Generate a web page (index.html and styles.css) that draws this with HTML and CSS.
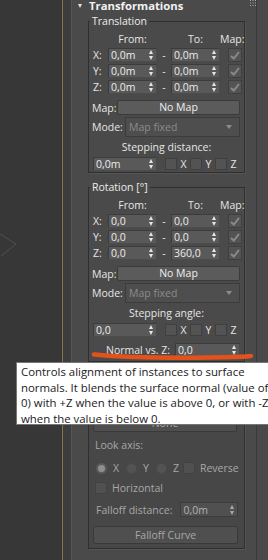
FILE: index.html
```html
<!DOCTYPE html>
<html>
<head>
<meta charset="utf-8">
<link rel="stylesheet" href="styles.css">
</head>
<body>
<div class="app">
  <div class="viewport">
    <svg class="vp-lines" width="62" height="560" viewBox="0 0 62 560"><path d="M0 234 L16 244 L1 256" fill="none" stroke="#505050" stroke-width="1"/></svg>
  </div>
  <div class="gold"></div>
  <div class="gutter"></div>
  <div class="rollout">
    <div class="ro-head">
      <span class="tri"></span>
      <span class="ro-title">Transformations</span>
      <svg class="dots" width="6" height="6" viewBox="0 0 6 6"><g fill="#a8a8a8"><rect x="0" y="0" width="1" height="1"/><rect x="2.5" y="0" width="1" height="1"/><rect x="5" y="0" width="1" height="1"/><rect x="0" y="2.5" width="1" height="1"/><rect x="2.5" y="2.5" width="1" height="1"/><rect x="5" y="2.5" width="1" height="1"/><rect x="0" y="5" width="1" height="1"/><rect x="2.5" y="5" width="1" height="1"/><rect x="5" y="5" width="1" height="1"/></g></svg>
    </div>
    <div class="ro-body">
      <div class="group">
        <div class="g-title">Translation</div>
        <div class="sgrid">
          <span></span><span class="ch">From:</span><span></span><span class="ch">To:</span><span class="ch map">Map:</span>
          <span class="axis">X:</span><div class="spin"><span>0,0m</span><i class="arr"></i></div><span class="dash">-</span><div class="spin"><span>0,0m</span><i class="arr"></i></div><span class="cb on"><svg width="10" height="9" viewBox="0 0 10 9"><path d="M1 5 L3.8 7.5 L9 1" fill="none" stroke="#8a8a8a" stroke-width="2"/></svg></span>
          <span class="axis">Y:</span><div class="spin"><span>0,0m</span><i class="arr"></i></div><span class="dash">-</span><div class="spin"><span>0,0m</span><i class="arr"></i></div><span class="cb on"><svg width="10" height="9" viewBox="0 0 10 9"><path d="M1 5 L3.8 7.5 L9 1" fill="none" stroke="#8a8a8a" stroke-width="2"/></svg></span>
          <span class="axis">Z:</span><div class="spin"><span>0,0m</span><i class="arr"></i></div><span class="dash">-</span><div class="spin"><span>0,0m</span><i class="arr"></i></div><span class="cb on"><svg width="10" height="9" viewBox="0 0 10 9"><path d="M1 5 L3.8 7.5 L9 1" fill="none" stroke="#8a8a8a" stroke-width="2"/></svg></span>
        </div>
        <div class="maprow"><span class="lbl-map">Map:</span><div class="btn">No Map</div></div>
        <div class="moderow"><span class="lbl-mode">Mode:</span><div class="dd"><span>Map fixed</span><i class="dd-arr"></i></div></div>
        <div class="steplabel">Stepping distance:</div>
        <div class="steprow">
          <div class="spin step"><span>0,0m</span><i class="arr"></i></div>
          <span class="cb sm"></span><span class="ax">X</span>
          <span class="cb sm"></span><span class="ax">Y</span>
          <span class="cb sm"></span><span class="ax">Z</span>
        </div>
      </div>

      <div class="group g2">
        <div class="g-title">Rotation [°]</div>
        <div class="sgrid">
          <span></span><span class="ch">From:</span><span></span><span class="ch">To:</span><span class="ch map">Map:</span>
          <span class="axis">X:</span><div class="spin"><span>0,0</span><i class="arr"></i></div><span class="dash">-</span><div class="spin"><span>0,0</span><i class="arr"></i></div><span class="cb on"><svg width="10" height="9" viewBox="0 0 10 9"><path d="M1 5 L3.8 7.5 L9 1" fill="none" stroke="#8a8a8a" stroke-width="2"/></svg></span>
          <span class="axis">Y:</span><div class="spin"><span>0,0</span><i class="arr"></i></div><span class="dash">-</span><div class="spin"><span>0,0</span><i class="arr"></i></div><span class="cb on"><svg width="10" height="9" viewBox="0 0 10 9"><path d="M1 5 L3.8 7.5 L9 1" fill="none" stroke="#8a8a8a" stroke-width="2"/></svg></span>
          <span class="axis">Z:</span><div class="spin"><span>0,0</span><i class="arr"></i></div><span class="dash">-</span><div class="spin"><span>360,0</span><i class="arr"></i></div><span class="cb on"><svg width="10" height="9" viewBox="0 0 10 9"><path d="M1 5 L3.8 7.5 L9 1" fill="none" stroke="#8a8a8a" stroke-width="2"/></svg></span>
        </div>
        <div class="maprow"><span class="lbl-map">Map:</span><div class="btn">No Map</div></div>
        <div class="moderow"><span class="lbl-mode">Mode:</span><div class="dd"><span>Map fixed</span><i class="dd-arr"></i></div></div>
        <div class="steplabel">Stepping angle:</div>
        <div class="steprow">
          <div class="spin step"><span>0,0</span><i class="arr"></i></div>
          <span class="cb sm"></span><span class="ax">X</span>
          <span class="cb sm"></span><span class="ax">Y</span>
          <span class="cb sm"></span><span class="ax">Z</span>
        </div>
        <div class="normrow"><span>Normal vs. Z:</span><div class="spin norm"><span>0,0</span><i class="arr"></i></div></div>
      </div>

      <div class="group g3 dim">
        <div class="btn none">None</div>
        <div class="lookaxis">Look axis:</div>
        <div class="radiorow">
          <span class="radio sel"></span><span class="rl">X</span>
          <span class="radio"></span><span class="rl">Y</span>
          <span class="radio"></span><span class="rl last">Z</span>
          <span class="cb sm dimcb"></span><span class="rl rev">Reverse</span>
        </div>
        <div class="horizrow"><span class="cb sm dimcb"></span><span class="rl">Horizontal</span></div>
        <div class="falloffrow"><span>Falloff distance:</span><div class="spin fall"><span>0,0m</span><i class="arr"></i></div></div>
        <div class="btn curve">Falloff Curve</div>
      </div>
    </div>
  </div>
  <div class="rightstrip"></div>

  <svg class="scribble" width="170" height="14" viewBox="0 0 170 14"><path d="M4 4.5 C 30 7, 80 8, 120 7.5 S 155 6.5, 161 6" fill="none" stroke="#e4521c" stroke-width="4.5" stroke-linecap="round"/></svg>

  <div class="tooltip">Controls alignment of instances to surface<br>normals. It blends the surface normal (value of<br>0) with +Z when the value is above 0, or with -Z<br>when the value is below 0.</div>
</div>
</body>
</html>
```

FILE: styles.css
```css
html, body {
  margin: 0;
  padding: 0;
}
body {
  width: 268px;
  height: 560px;
  overflow: hidden;
  background: #383838;
  font-family: "Open Sans", "Noto Sans", sans-serif;
  font-size: 10.5px;
  color: #e6e6e6;
}
.app {
  position: relative;
  display: flex;
  height: 560px;
  overflow: hidden;
}
.viewport {
  width: 62px;
  flex: none;
  background: #373737;
}
.vp-lines { display: block; }
.gold {
  width: 1px;
  flex: none;
  background: #86754a;
}
.gutter {
  width: 8px;
  flex: none;
  background: #3d3d3d;
}
.rollout {
  width: 186px;
  flex: none;
  box-sizing: border-box;
  background: #4a4a4a;
  border-left: 1px solid #575757;
  border-right: 1px solid #3a3a3a;
}
.rightstrip {
  flex: 1;
  background: #494949;
}
.ro-head {
  height: 14px;
  margin-top: -1px;
  display: flex;
  align-items: center;
  padding-left: 6px;
}
.tri {
  width: 0;
  height: 0;
  border-left: 2.5px solid transparent;
  border-right: 2.5px solid transparent;
  border-top: 4px solid #e0e0e0;
  margin-right: 7px;
}
.ro-title {
  font-weight: 700;
  font-size: 11.3px;
  color: #f2f2f2;
  line-height: 14px;
}
.dots {
  margin-left: auto;
  align-self: flex-start;
  margin-top: 1px;
}
.ro-body {
  padding: 0 11px 0 16px;
}
.group {
  border: 1px solid #2f2f2f;
  box-shadow: 1px 1px 0 #555;
  padding: 0 4px 1px 4px;
  margin-top: 8px;
}
.g2 {
  margin-top: 14px;
  padding-bottom: 4px;
}
.g-title {
  width: fit-content;
  margin: -9px 0 0 -3px;
  padding: 0 2px;
  height: 16px;
  line-height: 16px;
  background: #4a4a4a;
  color: #ececec;
}
.sgrid {
  display: grid;
  grid-template-columns: 15px 49px 14px 49px 1fr;
  grid-auto-rows: 16px;
  align-items: center;
  margin-top: 2px;
}
.ch {
  text-align: center;
  line-height: 16px;
}
.ch.map {
  justify-self: end;
  margin-right: -2px;
}
.axis {
  line-height: 16px;
}
.dash {
  text-align: center;
  line-height: 16px;
}
.spin {
  position: relative;
  height: 14px;
  box-sizing: border-box;
  background: #595959;
  border: 1px solid #3c3c3c;
  border-right-color: #4a4a4a;
  border-bottom-color: #4c4c4c;
  display: flex;
  align-items: center;
  padding-left: 2px;
  line-height: 12px;
  color: #ececec;
  white-space: nowrap;
}
.arr {
  margin-left: auto;
  margin-right: 2px;
  width: 5px;
  height: 10px;
  display: flex;
  flex-direction: column;
  justify-content: space-between;
  flex: none;
}
.arr::before,
.arr::after {
  content: "";
  display: block;
  width: 0;
  height: 0;
  border-left: 2.5px solid transparent;
  border-right: 2.5px solid transparent;
}
.arr::before { border-bottom: 4px solid #e6e6e6; }
.arr::after { border-top: 4px solid #e6e6e6; }
.cb {
  box-sizing: border-box;
  width: 14px;
  height: 14px;
  background: #535353;
  border: 1px solid #3f3f3f;
  display: flex;
  align-items: center;
  justify-content: center;
  flex: none;
}
.sgrid .cb { justify-self: end; }
.cb.sm {
  width: 12px;
  height: 12px;
}
.maprow {
  display: flex;
  align-items: center;
  height: 15px;
  margin-top: 5px;
}
.lbl-map {
  width: 25px;
  flex: none;
  margin-left: -1px;
  white-space: nowrap;
}
.btn {
  flex: 1;
  box-sizing: border-box;
  height: 15px;
  line-height: 13px;
  text-align: center;
  background: #5b5b5b;
  border: 1px solid #3b3b3b;
  border-radius: 2px;
  color: #efefef;
}
.moderow {
  display: flex;
  align-items: center;
  height: 20px;
  margin-top: 2px;
}
.lbl-mode {
  width: 33px;
  flex: none;
  margin-left: -1px;
  white-space: nowrap;
}
.dd {
  flex: 1;
  height: 20px;
  box-sizing: border-box;
  background: #4e4e4e;
  border: 1px solid #3c3c3c;
  display: flex;
  align-items: center;
  padding-left: 3px;
  color: #8c8c8c;
}
.dd-arr {
  margin-left: auto;
  margin-right: 7px;
  width: 0;
  height: 0;
  border-left: 3px solid transparent;
  border-right: 3px solid transparent;
  border-top: 4px solid #8c8c8c;
}
.steplabel {
  height: 16px;
  line-height: 16px;
  margin-top: 2px;
  text-align: center;
}
.steprow {
  display: flex;
  align-items: center;
  height: 14px;
  margin-top: 2px;
}
.spin.step {
  width: 64px;
  flex: none;
  margin-right: 8px;
}
.ax {
  width: 14px;
  text-align: center;
}
.normrow {
  display: flex;
  align-items: center;
  justify-content: flex-end;
  height: 14px;
  margin-top: 6px;
}
.normrow > span {
  margin-right: 5px;
}
.spin.norm {
  width: 65px;
  flex: none;
}
.g3 {
  margin-top: 14px;
  padding: 0 4px 4px 4px;
  background: #474747;
}
.dim {
  color: #a8a8a8;
}
.btn.none {
  margin-top: 39px;
  height: 16px;
  margin-right: 3px;
  background: #4f4f4f;
  color: #a8a8a8;
  border-color: #393939;
}
.lookaxis {
  height: 16px;
  line-height: 16px;
  margin-top: 5px;
  padding-left: 2px;
}
.radiorow {
  display: flex;
  align-items: center;
  height: 16px;
  margin-top: 7px;
  padding-left: 3px;
}
.radio {
  box-sizing: border-box;
  width: 11px;
  height: 11px;
  border-radius: 50%;
  background: #535353;
  border: 1px solid #4b4b4b;
  flex: none;
}
.radio.sel {
  background: #8f8f8f;
  border: 2px solid #5a5a5a;
}
.rl {
  margin-left: 6px;
  margin-right: 7px;
  line-height: 16px;
}
.rl.last { margin-right: 4px; }
.rl.rev { margin-left: 5px; margin-right: 0; }
.dimcb {
  background: #505050;
  border-color: #424242;
}
.horizrow {
  display: flex;
  align-items: center;
  height: 16px;
  margin-top: 4px;
  padding-left: 2px;
}
.horizrow .rl { margin-left: 5px; }
.falloffrow {
  display: flex;
  align-items: center;
  height: 15px;
  margin-top: 6px;
  padding-left: 3px;
  white-space: nowrap;
}
.falloffrow > span { margin-right: 8px; }
.spin.fall {
  width: 58px;
  flex: none;
  height: 15px;
  background: #505050;
  color: #b0b0b0;
  border-color: #3c3c3c;
}
.spin.fall .arr::before { border-bottom-color: #a8a8a8; }
.spin.fall .arr::after { border-top-color: #a8a8a8; }
.btn.curve {
  margin-top: 9px;
  height: 18px;
  line-height: 16px;
  margin-right: 2px;
  background: #4f4f4f;
  color: #a8a8a8;
  border-color: #393939;
}
.scribble {
  position: absolute;
  left: 90px;
  top: 350px;
}
.tooltip {
  position: absolute;
  left: 16px;
  top: 362px;
  width: 270px;
  box-sizing: border-box;
  height: 63px;
  padding: 1px 0 0 4px;
  background: #ffffff;
  border: 1px solid #767676;
  color: #1a1a1a;
  font-family: "Open Sans", "Noto Sans", sans-serif;
  font-size: 11.4px;
  line-height: 15.5px;
  white-space: nowrap;
}
```
